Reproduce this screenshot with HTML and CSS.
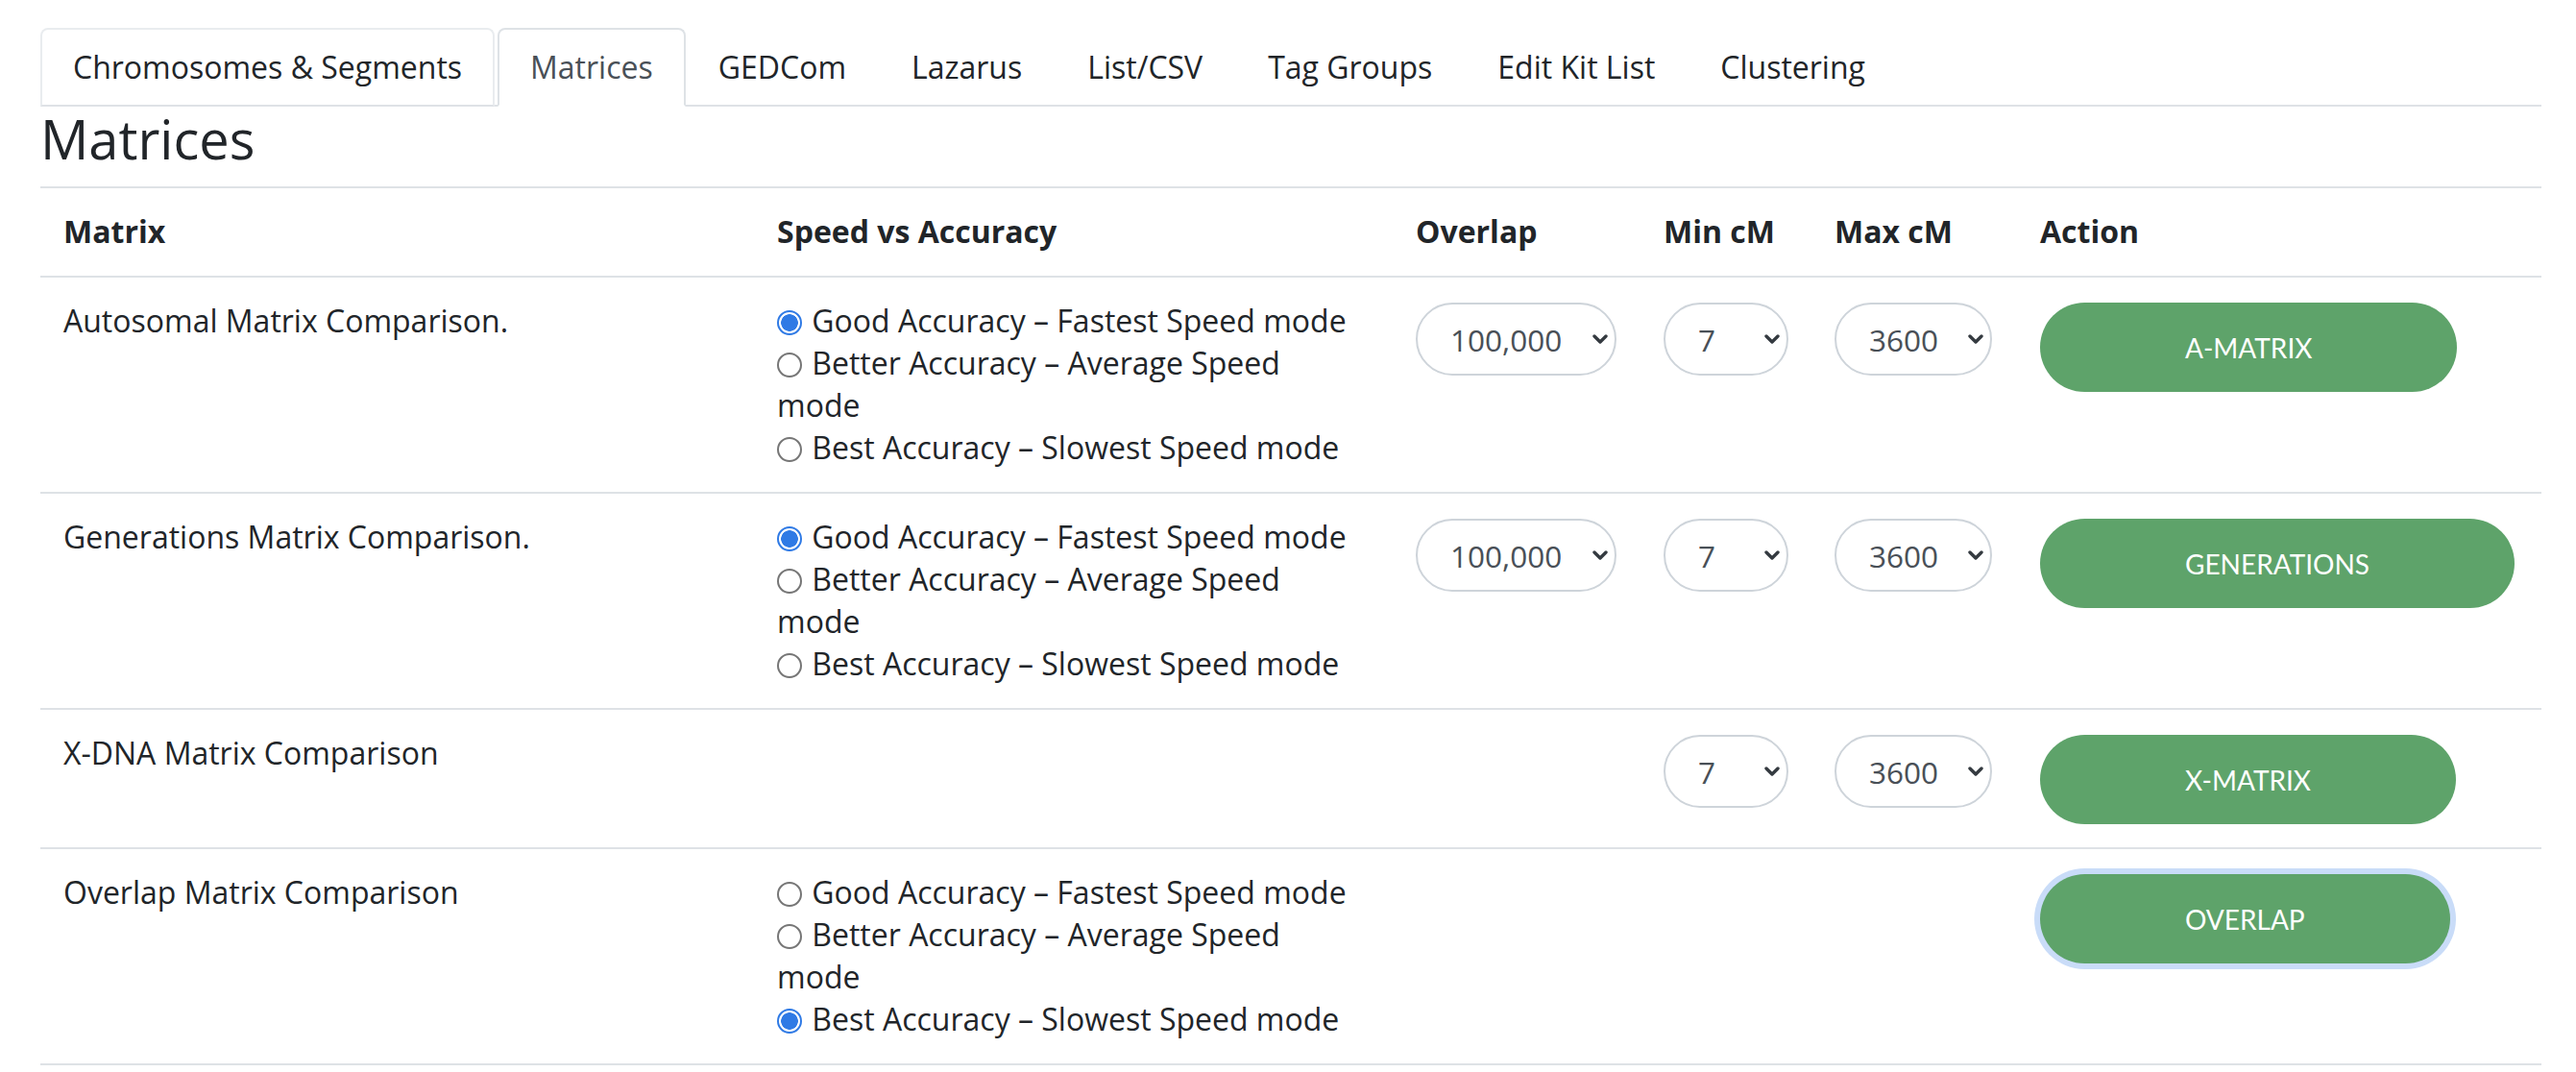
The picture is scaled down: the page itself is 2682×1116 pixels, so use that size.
FILE: index.html
```html
<!DOCTYPE html>
<html lang="en">
<head>
<meta charset="utf-8">
<title>Matrices</title>
<link rel="stylesheet" href="styles.css">
</head>
<body>
<div class="page">
  <ul class="tabs">
    <li class="tab tab-hover">Chromosomes &amp; Segments</li>
    <li class="tab tab-active">Matrices</li>
    <li class="tab">GEDCom</li>
    <li class="tab">Lazarus</li>
    <li class="tab">List/CSV</li>
    <li class="tab">Tag Groups</li>
    <li class="tab">Edit Kit List</li>
    <li class="tab">Clustering</li>
  </ul>
  <h3 class="title">Matrices</h3>
  <table class="grid">
    <colgroup>
      <col class="c-matrix"><col class="c-speed"><col class="c-overlap"><col class="c-min"><col class="c-max"><col class="c-action">
    </colgroup>
    <thead>
      <tr><th>Matrix</th><th>Speed vs Accuracy</th><th>Overlap</th><th>Min cM</th><th>Max cM</th><th>Action</th></tr>
    </thead>
    <tbody>
      <tr>
        <td>Autosomal Matrix Comparison.</td>
        <td>
          <label class="opt"><input type="radio" name="a" checked> Good Accuracy – Fastest Speed mode</label>
          <label class="opt"><input type="radio" name="a"> Better Accuracy – Average Speed mode</label>
          <label class="opt"><input type="radio" name="a"> Best Accuracy – Slowest Speed mode</label>
        </td>
        <td><span class="sel sel-ov"><select><option>100,000</option></select><svg class="chev" viewBox="0 0 16 10"><path d="M2 2 L8 8 L14 2" fill="none" stroke="#343a40" stroke-width="3.4" stroke-linecap="round" stroke-linejoin="round"/></svg></span></td>
        <td><span class="sel sel-min"><select><option>7</option></select><svg class="chev" viewBox="0 0 16 10"><path d="M2 2 L8 8 L14 2" fill="none" stroke="#343a40" stroke-width="3.4" stroke-linecap="round" stroke-linejoin="round"/></svg></span></td>
        <td><span class="sel sel-max"><select><option>3600</option></select><svg class="chev" viewBox="0 0 16 10"><path d="M2 2 L8 8 L14 2" fill="none" stroke="#343a40" stroke-width="3.4" stroke-linecap="round" stroke-linejoin="round"/></svg></span></td>
        <td><button class="btn">A-MATRIX</button></td>
      </tr>
      <tr>
        <td>Generations Matrix Comparison.</td>
        <td>
          <label class="opt"><input type="radio" name="g" checked> Good Accuracy – Fastest Speed mode</label>
          <label class="opt"><input type="radio" name="g"> Better Accuracy – Average Speed mode</label>
          <label class="opt"><input type="radio" name="g"> Best Accuracy – Slowest Speed mode</label>
        </td>
        <td><span class="sel sel-ov"><select><option>100,000</option></select><svg class="chev" viewBox="0 0 16 10"><path d="M2 2 L8 8 L14 2" fill="none" stroke="#343a40" stroke-width="3.4" stroke-linecap="round" stroke-linejoin="round"/></svg></span></td>
        <td><span class="sel sel-min"><select><option>7</option></select><svg class="chev" viewBox="0 0 16 10"><path d="M2 2 L8 8 L14 2" fill="none" stroke="#343a40" stroke-width="3.4" stroke-linecap="round" stroke-linejoin="round"/></svg></span></td>
        <td><span class="sel sel-max"><select><option>3600</option></select><svg class="chev" viewBox="0 0 16 10"><path d="M2 2 L8 8 L14 2" fill="none" stroke="#343a40" stroke-width="3.4" stroke-linecap="round" stroke-linejoin="round"/></svg></span></td>
        <td><button class="btn">GENERATIONS</button></td>
      </tr>
      <tr>
        <td>X-DNA Matrix Comparison</td>
        <td></td>
        <td></td>
        <td><span class="sel sel-min"><select><option>7</option></select><svg class="chev" viewBox="0 0 16 10"><path d="M2 2 L8 8 L14 2" fill="none" stroke="#343a40" stroke-width="3.4" stroke-linecap="round" stroke-linejoin="round"/></svg></span></td>
        <td><span class="sel sel-max"><select><option>3600</option></select><svg class="chev" viewBox="0 0 16 10"><path d="M2 2 L8 8 L14 2" fill="none" stroke="#343a40" stroke-width="3.4" stroke-linecap="round" stroke-linejoin="round"/></svg></span></td>
        <td><button class="btn">X-MATRIX</button></td>
      </tr>
      <tr>
        <td>Overlap Matrix Comparison</td>
        <td>
          <label class="opt"><input type="radio" name="o"> Good Accuracy – Fastest Speed mode</label>
          <label class="opt"><input type="radio" name="o"> Better Accuracy – Average Speed mode</label>
          <label class="opt"><input type="radio" name="o" checked> Best Accuracy – Slowest Speed mode</label>
        </td>
        <td></td>
        <td></td>
        <td></td>
        <td><button class="btn btn-focus">OVERLAP</button></td>
      </tr>
    </tbody>
  </table>
</div>
</body>
</html>
```

FILE: styles.css
```css
* { box-sizing: border-box; }
html, body { margin: 0; padding: 0; background: #fff; }
body {
  font-family: "Open Sans", "Noto Sans", sans-serif;
  font-size: 32px;
  line-height: 44px;
  color: #212529;
}
.page { padding: 29px 36px 0 42px; }

.tabs {
  list-style: none;
  margin: 0;
  padding: 0;
  display: flex;
  gap: 0;
  border-bottom: 2px solid #dee2e6;
}
.tab {
  padding: 16px 32px;
  line-height: 46px;
  border: 2px solid transparent;
  border-radius: 8px 8px 0 0;
  margin-bottom: -2px;
  color: #212529;
}
.tab-hover { border-color: #e9ecef #e9ecef #dee2e6; margin-right: 3px; }
.tab-active { color: #495057; background: #fff; border-color: #dee2e6 #dee2e6 #fff; }

.title {
  margin: 0 0 17px;
  font-size: 56px;
  font-weight: 400;
  line-height: 66px;
}

.grid { width: 100%; border-collapse: collapse; table-layout: fixed; border-bottom: 2px solid #dee2e6; }
.c-matrix { width: 743px; }
.c-speed { width: 665px; }
.c-overlap { width: 258px; }
.c-min { width: 178px; }
.c-max { width: 214px; }
.c-action { width: 546px; }
.grid th, .grid td {
  padding: 23px 24px 24px;
  border-top: 2px solid #dee2e6;
  vertical-align: top;
  text-align: left;
}
.grid th { font-weight: 700; }

.opt { display: block; max-width: 600px; }
.opt input {
  appearance: none;
  -webkit-appearance: none;
  width: 26px; height: 26px;
  margin: 0 2px 0 0;
  border: 2px solid #767676;
  border-radius: 50%;
  vertical-align: -3px;
  background: #fff;
}
.opt input:checked {
  border-color: #2f7ae5;
  background: radial-gradient(circle, #2f7ae5 0 8.5px, #fff 9.1px);
}

.sel { position: relative; display: inline-block; margin-top: 3px; }
.sel select {
  appearance: none;
  -webkit-appearance: none;
  height: 76px;
  padding: 0 40px 0 34px;
  font-family: "Open Sans", sans-serif;
  font-size: 31.5px;
  color: #495057;
  background: #fff;
  border: 2px solid #ced4da;
  border-radius: 38px;
}
.sel-ov select { width: 209px; }
.sel-min select { width: 130px; }
.sel-max select { width: 164px; }
.chev { position: absolute; right: 9px; top: 33px; width: 16px; height: 10px; }

.btn {
  height: 93px;
  margin-top: 3px;
  padding: 0 151px;
  font-family: "Lato", sans-serif;
  font-size: 28px;
  color: #fff;
  background: #5ea36a;
  border: 0;
  border-radius: 47px;
}
.btn-focus { box-shadow: 0 0 0 6px #c9dcf8; }
```
